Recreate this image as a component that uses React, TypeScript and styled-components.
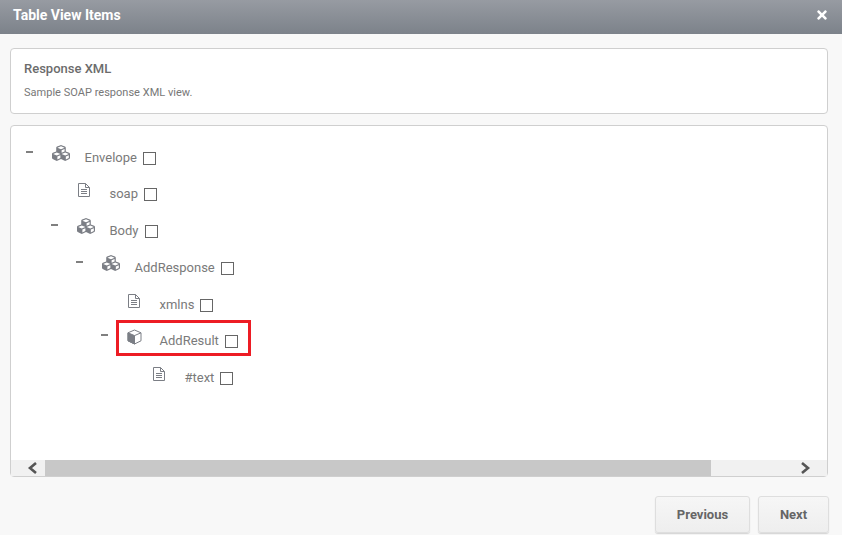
import React from 'react';
import styled, { createGlobalStyle } from 'styled-components';
import { FaCubes, FaTimes } from 'react-icons/fa';

const GlobalStyle = createGlobalStyle`
  html, body {
    margin: 0;
    padding: 0;
    background: #f8f8f8;
    font-family: Roboto, "Liberation Sans", sans-serif;
    overflow: hidden;
  }
`;

const Modal = styled.div`
  width: 842px;
  height: 535px;
  display: flex;
  flex-direction: column;
  overflow: hidden;
`;

const Header = styled.header`
  flex: none;
  height: 34px;
  padding: 0 13px;
  display: flex;
  align-items: center;
  justify-content: space-between;
  background: linear-gradient(#979ba2, #7c828a);
  color: #fff;
`;

const Title = styled.h1`
  margin: 0 0 5px;
  font-size: 14px;
  font-weight: 700;
`;

const Close = styled.span`
  display: flex;
  margin: 0 0 4px;
  font-size: 14px;
`;

const Content = styled.main`
  flex: none;
  padding: 14px 14px 0 10px;
  display: flex;
  flex-direction: column;
  gap: 11px;
`;

const Card = styled.section`
  background: #fff;
  border: 1px solid #cfcfcf;
  border-radius: 4px;
`;

const Intro = styled(Card)`
  height: 66px;
  box-sizing: border-box;
  padding: 12px 13px 0;
  color: #6c6c6c;
`;

const IntroTitle = styled.h2`
  margin: 0;
  font-size: 13px;
  line-height: 15px;
  font-weight: 500;
`;

const IntroText = styled.p`
  margin: 10px 0 0;
  font-size: 11px;
  line-height: 13px;
  letter-spacing: 0.02px;
  color: #777;
`;

const TreeCard = styled(Card)`
  height: 352px;
  box-sizing: border-box;
  display: flex;
  flex-direction: column;
`;

const TreeArea = styled.div`
  flex: 1;
  padding: 13.6px 0 0 15px;
`;

const Row = styled.div<{ $depth: number }>`
  position: relative;
  height: 36.75px;
  margin-left: ${(p) => p.$depth * 25}px;
  display: flex;
  align-items: flex-start;
  color: #7a7a7a;
  font-size: 13px;
`;

const Toggle = styled.span`
  flex: none;
  width: 7px;
  height: 2px;
  margin: 11px 19px 0 0;
  background: #808080;
`;

const ToggleSpace = styled.span`
  flex: none;
  width: 26px;
`;

const IconSlot = styled.span`
  flex: none;
  width: 32.5px;
  height: 20px;
  margin-top: 4px;
  display: flex;
  color: #7b7e85;
  font-size: 18px;
`;

const ShapeIcon = styled.svg`
  margin-top: 2px;
`;

const Label = styled.span`
  margin-top: 10px;
  line-height: 16px;
`;

const Check = styled.span`
  flex: none;
  width: 11px;
  height: 11px;
  margin: 12px 0 0 6px;
  border: 1px solid #666;
  background: #fff;
`;

const Highlight = styled.span`
  position: absolute;
  left: 15px;
  top: -3px;
  width: 129px;
  height: 30px;
  border: 3px solid #ed1c24;
  pointer-events: none;
`;

const ScrollBar = styled.div`
  flex: none;
  height: 16px;
  display: flex;
  align-items: stretch;
  background: #f1f1f1;
`;

const ScrollArrow = styled.span<{ $side: 'left' | 'right' }>`
  flex: none;
  width: 34px;
  box-sizing: border-box;
  padding-${(p) => p.$side}: 9px;
  display: flex;
  align-items: center;
  justify-content: center;
`;

const ScrollTrack = styled.div`
  flex: 1;
  display: flex;
`;

const ScrollThumb = styled.div`
  background: #c8c8c8;
`;

const Footer = styled.footer`
  flex: none;
  margin-top: 19px;
  padding-right: 13px;
  display: flex;
  justify-content: flex-end;
  gap: 8px;
`;

const Button = styled.button<{ $width: number }>`
  width: ${(p) => p.$width}px;
  height: 37px;
  padding: 0;
  border: 1px solid #dedede;
  border-radius: 3px;
  background: linear-gradient(#f6f6f6, #eeeeee);
  box-shadow: 0 1px 1px #d4d4d4;
  color: #666;
  font-family: inherit;
  font-size: 13px;
  font-weight: 700;
`;

const FileIcon = () => (
  <ShapeIcon width="14" height="16" viewBox="0 0 14 16" fill="none" stroke="#7b7e85">
    <path d="M1.5 1.5h7l4 4v9h-11z" />
    <path d="M8.5 1.5v4h4" />
    <path d="M4 7.5h6M4 9.5h6M4 11.5h6" />
  </ShapeIcon>
);

const CubeIcon = () => (
  <ShapeIcon width="15" height="16" viewBox="0 0 15 16">
    <path d="M7.5 1 14 3.8v8L7.5 15 1 11.8v-8z" fill="#fff" stroke="#7b7e85" />
    <path d="M1 3.8 7.5 6.6V15L1 11.8z" fill="#7b7e85" stroke="#7b7e85" />
    <path d="M7.5 6.6 14 3.8" stroke="#7b7e85" fill="none" />
  </ShapeIcon>
);

const Chevron = ({ flip }: { flip?: boolean }) => (
  <svg width="11" height="12" viewBox="0 0 11 12" fill="none" stroke="#555" strokeWidth="2.6">
    <path d={flip ? 'M2 1 8 6 2 11' : 'M9 1 3 6 9 11'} />
  </svg>
);

type TreeNode = {
  label: string;
  depth: number;
  icon: 'cubes' | 'cube' | 'file';
  open?: boolean;
  highlighted?: boolean;
};

const nodes: TreeNode[] = [
  { label: 'Envelope', depth: 0, icon: 'cubes', open: true },
  { label: 'soap', depth: 1, icon: 'file' },
  { label: 'Body', depth: 1, icon: 'cubes', open: true },
  { label: 'AddResponse', depth: 2, icon: 'cubes', open: true },
  { label: 'xmlns', depth: 3, icon: 'file' },
  { label: 'AddResult', depth: 3, icon: 'cube', open: true, highlighted: true },
  { label: '#text', depth: 4, icon: 'file' },
];

const icons = {
  cubes: <FaCubes />,
  cube: <CubeIcon />,
  file: <FileIcon />,
};

const App = () => (
  <Modal>
    <GlobalStyle />
    <Header>
      <Title>Table View Items</Title>
      <Close>
        <FaTimes />
      </Close>
    </Header>
    <Content>
      <Intro>
        <IntroTitle>Response XML</IntroTitle>
        <IntroText>Sample SOAP response XML view.</IntroText>
      </Intro>
      <TreeCard>
        <TreeArea>
          {nodes.map((node) => (
            <Row key={node.label} $depth={node.depth}>
              {node.open ? <Toggle /> : <ToggleSpace />}
              <IconSlot>{icons[node.icon]}</IconSlot>
              <Label>{node.label}</Label>
              <Check />
              {node.highlighted && <Highlight />}
            </Row>
          ))}
        </TreeArea>
        <ScrollBar>
          <ScrollArrow $side="left">
            <Chevron />
          </ScrollArrow>
          <ScrollTrack>
            <ScrollThumb style={{ width: `${(666 / 748) * 100}%` }} />
          </ScrollTrack>
          <ScrollArrow $side="right">
            <Chevron flip />
          </ScrollArrow>
        </ScrollBar>
      </TreeCard>
    </Content>
    <Footer>
      <Button $width={95}>Previous</Button>
      <Button $width={71}>Next</Button>
    </Footer>
  </Modal>
);

export default App;
